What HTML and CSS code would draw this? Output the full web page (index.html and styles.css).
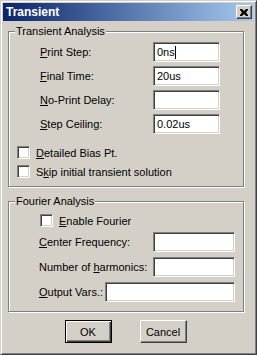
FILE: index.html
```html
<!DOCTYPE html>
<html lang="en">
<head>
  <meta charset="UTF-8">
  <title>Transient</title>
  <link rel="stylesheet" href="styles.css">
</head>
<body>
  <div class="dialog">
    <div class="titlebar">
      <span class="title">Transient</span>
      <span class="close">
        <svg width="8" height="7" viewBox="0 0 8 7"><path d="M0 0h2l2 2 2-2h2v1L6 3.5 8 6v1H6L4 5 2 7H0V6l2-2.5L0 1z" fill="#000"/></svg>
      </span>
    </div>

    <fieldset class="group">
      <legend>Transient Analysis</legend>
      <div class="rows">
        <div class="row"><label><u>P</u>rint Step:</label><span class="field">0ns<span class="caret"></span></span></div>
        <div class="row"><label><u>F</u>inal Time:</label><span class="field">20us</span></div>
        <div class="row"><label><u>N</u>o-Print Delay:</label><span class="field"></span></div>
        <div class="row"><label><u>S</u>tep Ceiling:</label><span class="field">0.02us</span></div>
      </div>
      <div class="checks">
        <div class="check-row"><span class="check"></span><span><u>D</u>etailed Bias Pt.</span></div>
        <div class="check-row"><span class="check"></span><span>S<u>k</u>ip initial transient solution</span></div>
      </div>
    </fieldset>

    <fieldset class="group fourier">
      <legend>Fourier Analysis</legend>
      <div class="check-row enable"><span class="check"></span><span><u>E</u>nable Fourier</span></div>
      <div class="rows">
        <div class="row"><label><u>C</u>enter Frequency:</label><span class="field wide"></span></div>
        <div class="row"><label>Number of <u>h</u>armonics:</label><span class="field wide"></span></div>
        <div class="row"><label class="short"><u>O</u>utput Vars.:</label><span class="field long"></span></div>
      </div>
    </fieldset>

    <div class="buttons">
      <button class="btn default">OK</button>
      <button class="btn">Cancel</button>
    </div>
  </div>
</body>
</html>
```

FILE: styles.css
```css
* {
  box-sizing: border-box;
}
body {
  margin: 0;
  font-family: "Liberation Sans", Arial, sans-serif;
  font-size: 11px;
  color: #000;
  background: #d4d0c8;
}
.dialog {
  width: 257px;
  height: 355px;
  background: #d4d0c8;
  border: 1px solid;
  border-color: #d4d0c8 #404040 #404040 #d4d0c8;
  box-shadow: inset 1px 1px 0 #fff, inset -1px -1px 0 #808080;
  padding: 2px;
  display: flex;
  flex-direction: column;
}
.titlebar {
  height: 18px;
  background: linear-gradient(to right, #0a246a, #a6caf0);
  display: flex;
  align-items: center;
  justify-content: space-between;
  padding: 0 2px 0 3px;
}
.title {
  color: #fff;
  font-weight: bold;
  font-size: 12px;
}
.close {
  width: 16px;
  height: 14px;
  background: #d4d0c8;
  border: 1px solid;
  border-color: #fff #404040 #404040 #fff;
  box-shadow: inset -1px -1px 0 #808080;
  display: flex;
  align-items: center;
  justify-content: center;
  padding-right: 1px;
}
.group {
  margin: 0 10px 0 5px;
  padding: 0;
  border: 1px solid #808080;
  box-shadow: 1px 1px 0 #fff, inset 1px 1px 0 #fff;
  min-width: 0;
}
.group legend {
  margin-left: 6px;
  padding: 0 1px;
  background: #d4d0c8;
  line-height: 13px;
}
.group:first-of-type {
  margin-top: 4px;
  height: 162px;
}
.rows {
  display: flex;
  flex-direction: column;
  gap: 4px;
  margin-top: 4px;
}
.row {
  display: flex;
  align-items: center;
  padding-left: 31px;
}
.row label {
  width: 113px;
}
.field {
  width: 67px;
  height: 20px;
  background: #fff;
  border: 1px solid;
  border-color: #808080 #fff #fff #808080;
  box-shadow: inset 1px 1px 0 #404040, inset -1px -1px 0 #d4d0c8;
  padding: 3px 0 0 3px;
  line-height: 13px;
  display: flex;
  align-items: flex-start;
}
.caret {
  display: inline-block;
  width: 1px;
  height: 13px;
  background: #000;
}
.checks {
  display: flex;
  flex-direction: column;
  gap: 6px;
  margin-top: 12px;
  padding-left: 8px;
}
.check-row {
  display: flex;
  align-items: center;
  gap: 6px;
}
.check {
  width: 13px;
  height: 13px;
  background: #fff;
  border: 1px solid;
  border-color: #808080 #fff #fff #808080;
  box-shadow: inset 1px 1px 0 #404040, inset -1px -1px 0 #d4d0c8;
}
.fourier {
  margin-top: 8px;
  height: 117px;
}
.enable {
  padding-left: 31px;
  margin-top: 6px;
}
.fourier .rows {
  margin-top: 5px;
  gap: 5px;
}
.fourier .row {
  padding-left: 30px;
}
.fourier .row label {
  width: 114px;
}
.fourier .row label.short {
  width: 66px;
}
.field.wide {
  width: 82px;
}
.field.long {
  width: 130px;
}
.buttons {
  display: flex;
  justify-content: center;
  gap: 28px;
  margin-top: 8px;
  padding-right: 6px;
}
.btn {
  width: 47px;
  height: 23px;
  font-family: "Liberation Sans", Arial, sans-serif;
  font-size: 11px;
  background: #d4d0c8;
  border: 1px solid;
  border-color: #fff #404040 #404040 #fff;
  box-shadow: inset -1px -1px 0 #808080;
  padding: 0;
}
.btn.default {
  border-color: #000;
  box-shadow: inset 1px 1px 0 #fff, inset -1px -1px 0 #404040, inset -2px -2px 0 #808080;
}
```
